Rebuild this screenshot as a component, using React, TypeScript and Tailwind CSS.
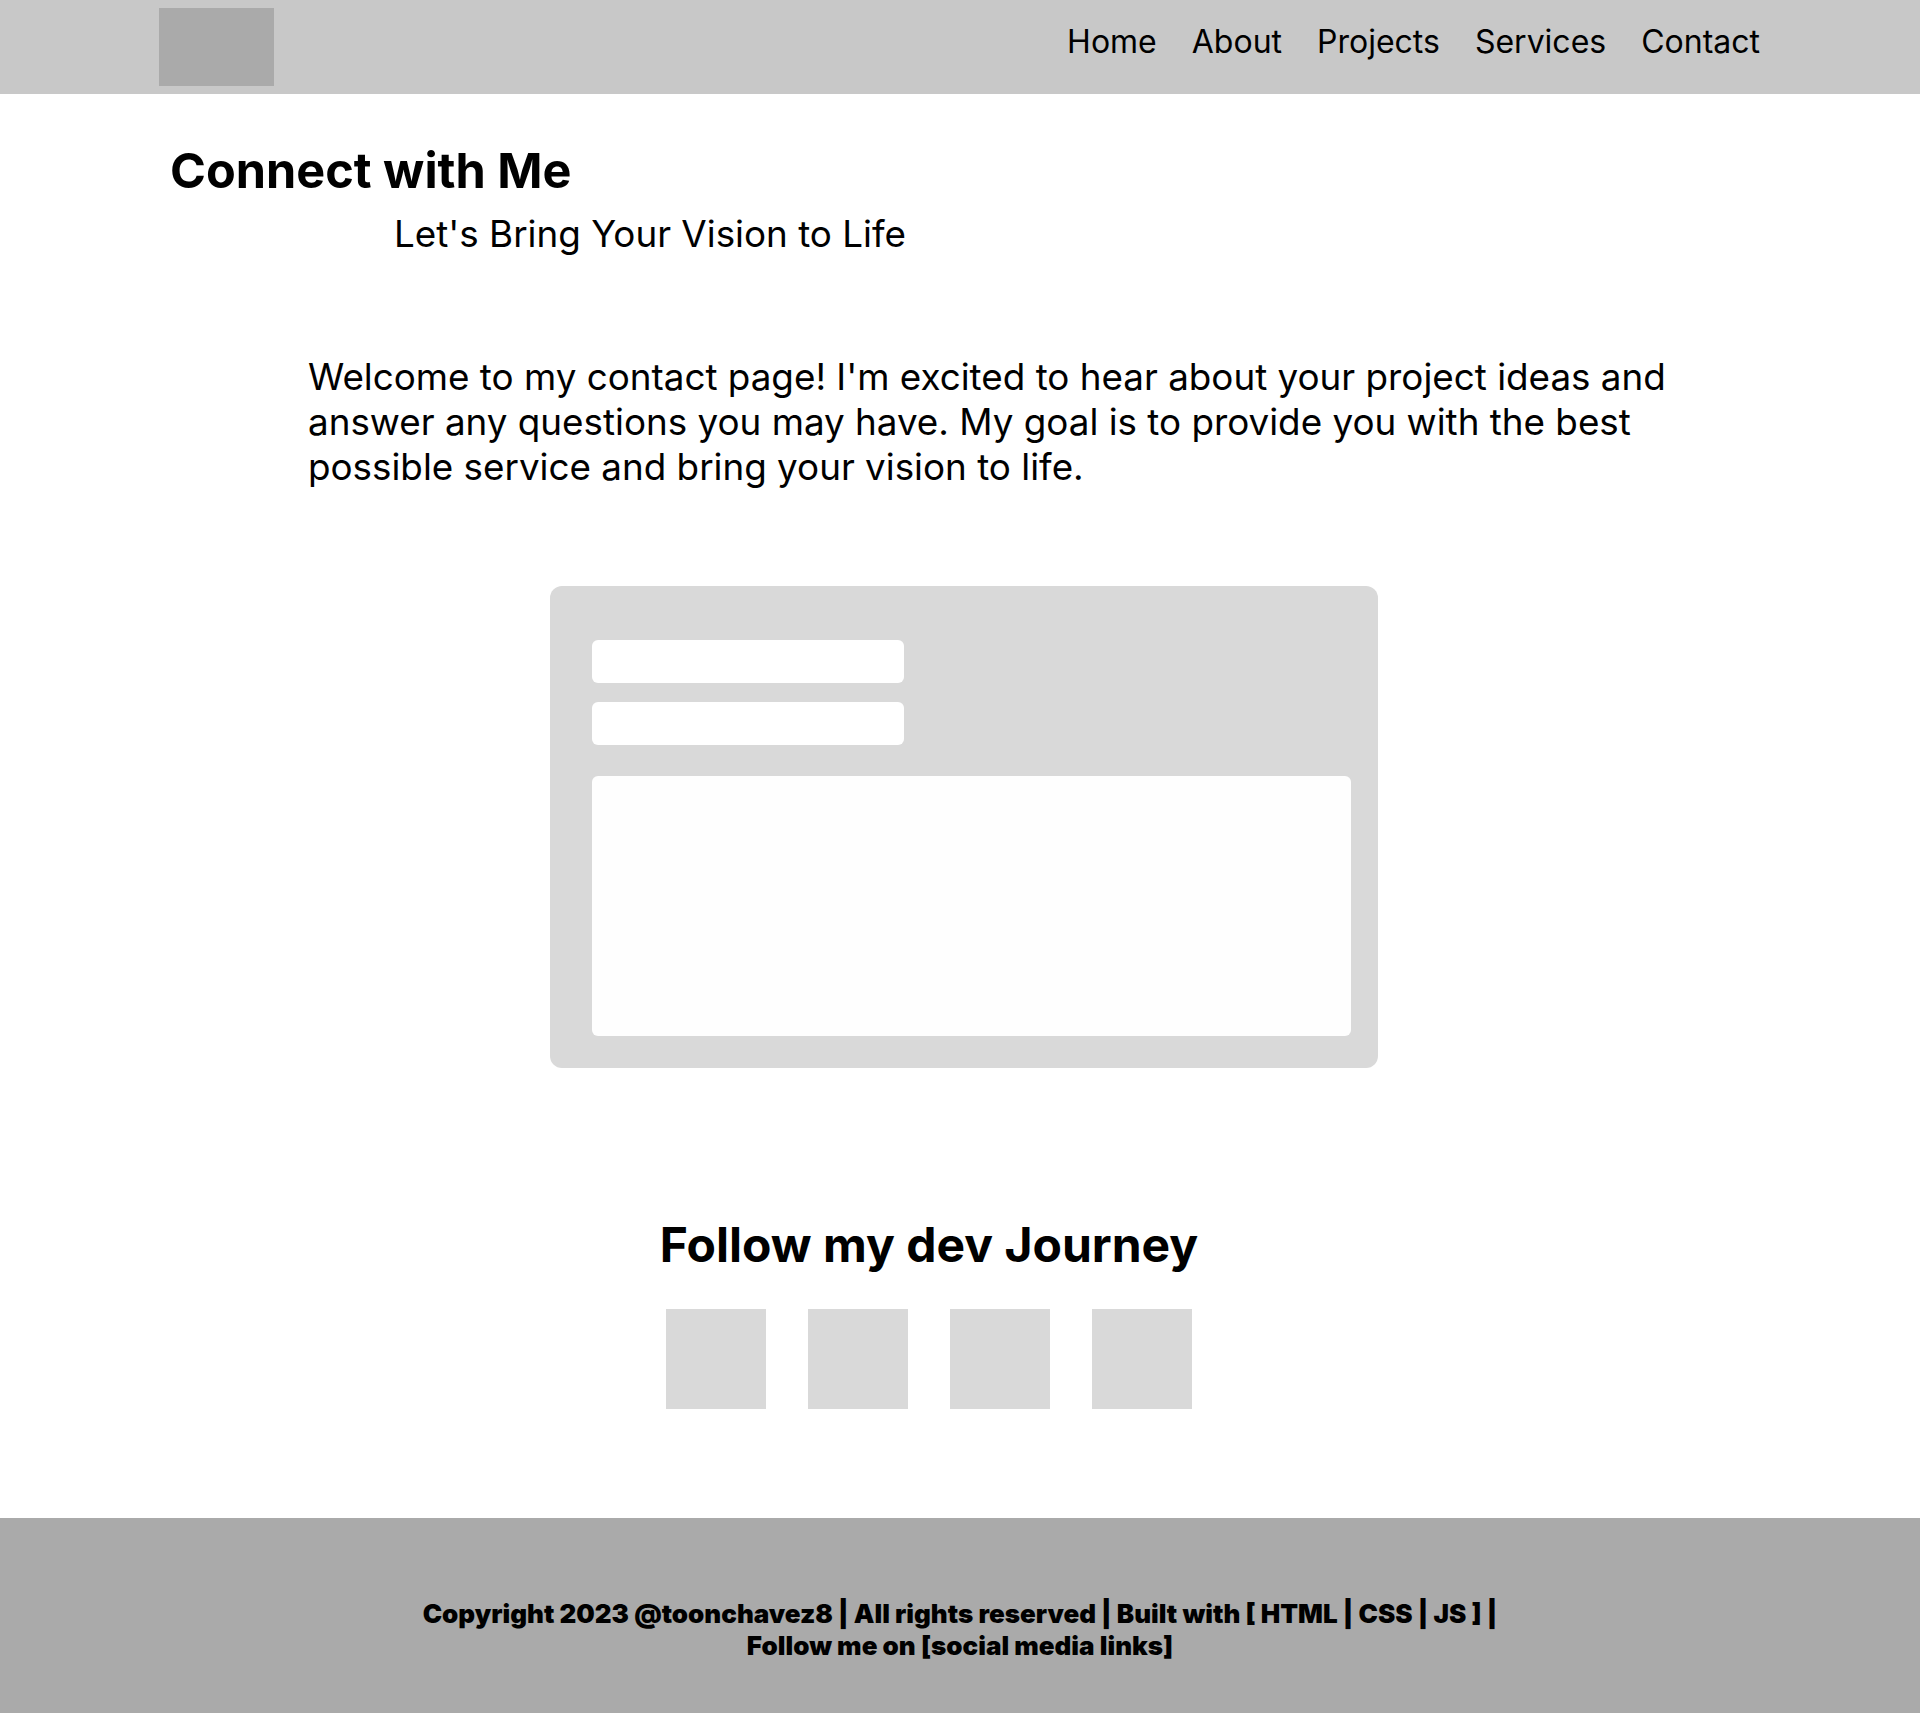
const navLinks = ["Home", "About", "Projects", "Services", "Contact"];
const socials = ["github", "linkedin", "twitter", "youtube"];

function Header() {
  return (
    <header className="h-[94px] bg-[#c8c8c8] flex items-start justify-between pl-[159px] pr-[160px]">
      <div className="mt-[8px] w-[115px] h-[78px] bg-[#aaaaaa]" />
      <nav className="pt-[22px]">
        <ul className="flex gap-[35px] text-[32px] leading-[39px] text-black">
          {navLinks.map((link) => (
            <li key={link}>
              <a href="#">{link}</a>
            </li>
          ))}
        </ul>
      </nav>
    </header>
  );
}

function ContactForm() {
  return (
    <form className="ml-[550px] w-[828px] h-[482px] bg-[#d9d9d9] rounded-[12px] pl-[42px] pr-[27px] pt-[54px] flex flex-col">
      <input className="w-[312px] h-[43px] bg-white rounded-[6px] outline-none" aria-label="Name" />
      <input className="mt-[19px] w-[312px] h-[43px] bg-white rounded-[6px] outline-none" aria-label="Email" />
      <textarea className="mt-[31px] w-[759px] h-[260px] bg-[#fefefe] rounded-[6px] outline-none resize-none" aria-label="Message" />
    </form>
  );
}

export default function App() {
  return (
    <div className="min-h-screen bg-white text-black" style={{ fontFamily: "Inter, 'Noto Sans', sans-serif" }}>
      <Header />

      <main>
        <section>
          <h1 className="mt-[48px] ml-[170px] text-[48.6px] leading-[58px] font-bold">Connect with Me</h1>
          <h2 className="mt-[12px] ml-[394px] text-[36.8px] leading-[44px] font-normal">Let's Bring Your Vision to Life</h2>
          <p className="mt-[98px] ml-[308px] w-[1420px] text-[36.8px] leading-[45px]">
            Welcome to my contact page! I'm excited to hear about your project ideas and answer any questions you may
            have. My goal is to provide you with the best possible service and bring your vision to life.
          </p>
        </section>

        <section className="mt-[97px]">
          <ContactForm />
        </section>

        <section className="mt-[148px] pr-[62px] flex flex-col items-center">
          <h2 className="text-[48px] leading-[58px] font-bold">Follow my dev Journey</h2>
          <div className="mt-[35px] flex gap-[42px]">
            {socials.map((s) => (
              <a key={s} href="#" aria-label={s} className="block w-[100px] h-[100px] bg-[#d9d9d9]" />
            ))}
          </div>
        </section>
      </main>

      <footer className="mt-[109px] h-[195px] bg-[#aaaaaa] flex justify-center pt-[80px]">
        <p className="text-center text-[26px] leading-[32px] font-black">
          Copyright 2023 @toonchavez8 | All rights reserved | Built with [ HTML | CSS | JS ] |
          <br />
          Follow me on [social media links]
        </p>
      </footer>
    </div>
  );
}
